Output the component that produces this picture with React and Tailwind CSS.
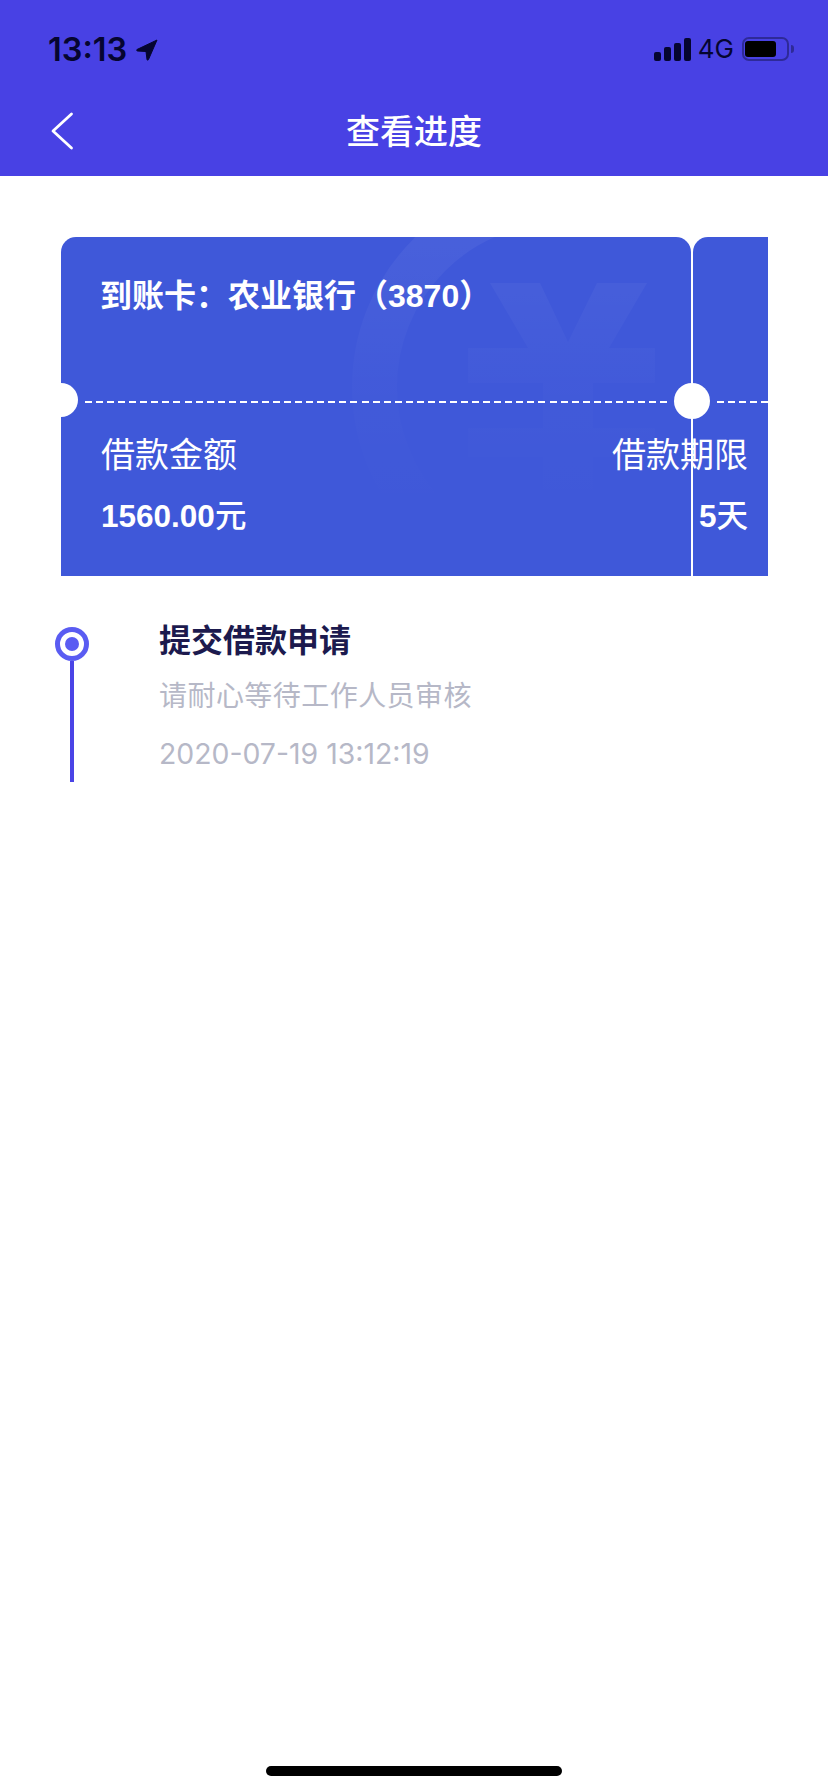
const cjk = { fontFamily: '"Liberation Sans", "Noto Sans CJK SC", sans-serif' };
const inter = { fontFamily: 'Inter, "Noto Sans CJK SC", sans-serif' };

function StatusBar() {
  return (
    <div className="flex h-[98px] items-start justify-between pl-[48px] pr-[34px] pt-[31px] text-[#050530]" style={inter}>
      <div className="mt-[1px] flex items-center gap-[9px]">
        <span className="text-[32.5px] font-semibold leading-[36px]">13:13</span>
        <svg width="22" height="22" viewBox="0 0 22 22">
          <path d="M21 1 L1 10.5 Q0 11.5 1.5 12 L10 12.5 L11 20.5 Q11.5 22 12.5 20.5 Z" fill="#050530" stroke="#050530" strokeWidth="1" strokeLinejoin="round" />
        </svg>
      </div>
      <div className="flex items-center">
        <svg width="37" height="23" viewBox="0 0 37 23" fill="#050530">
          <rect x="0" y="14" width="7" height="9" rx="2" />
          <rect x="10" y="9" width="7" height="14" rx="2" />
          <rect x="20" y="5" width="7" height="18" rx="2" />
          <rect x="30" y="0" width="7" height="23" rx="2" />
        </svg>
        <span className="ml-[7px] text-[26px] font-normal leading-[36px]">4G</span>
        <div className="ml-[8px] h-[24px] w-[47px] rounded-[7px] border-2 border-[#2e2a98] p-[2px] pl-[1px]">
          <div className="h-full w-[31px] rounded-[3px] bg-black" />
        </div>
        <div className="ml-[2px] h-[8px] w-[3px] rounded-r-full bg-[#2e2a98]" />
      </div>
    </div>
  );
}

function Header() {
  return (
    <div className="h-[176px] bg-[#4841e4]">
      <StatusBar />
      <div className="relative flex h-[66px] items-center justify-center pt-[2px]">
        <svg className="absolute left-[50px] top-[14px]" width="24" height="38" viewBox="0 0 24 38" fill="none">
          <path d="M21.5 2 L3 19 L21.5 36" stroke="#ffffff" strokeWidth="2.8" strokeLinecap="round" strokeLinejoin="round" />
        </svg>
        <span className="text-[34px] font-medium leading-[46px] text-white" style={cjk}>查看进度</span>
      </div>
    </div>
  );
}

function Ticket() {
  return (
    <div className="relative ml-[61px] mt-[61px] flex h-[339px] w-[707px] gap-[2px] overflow-hidden" style={cjk}>
      <div className="relative h-full w-[630px] shrink-0 overflow-hidden rounded-t-[15px] bg-[#3f58d9]">
        {/* faint yen coin watermark */}
        <svg className="absolute left-[280px] top-0" width="350" height="339" viewBox="0 0 350 339" fill="none">
          <defs>
            <linearGradient id="wm" gradientUnits="userSpaceOnUse" x1="0" y1="0" x2="0" y2="280">
              <stop offset="0" stopColor="#ffffff" stopOpacity="0.05" />
              <stop offset="0.5" stopColor="#ffffff" stopOpacity="0.015" />
              <stop offset="1" stopColor="#ffffff" stopOpacity="0" />
            </linearGradient>
          </defs>
          <path d="M220 -36.5 A186.5 186.5 0 0 0 220 336.5" stroke="url(#wm)" strokeWidth="45" />
          <path
            d="M149 46 L199 46 L227 105 L256 46 L306 46 L268 111 L314 111 L314 146 L252 146 L252 191 L314 191 L314 220 L252 220 L252 253 L202 253 L202 220 L127 220 L127 191 L202 191 L202 146 L127 146 L127 111 L187 111 Z"
            fill="url(#wm)"
          />
        </svg>
        <div className="relative flex h-full flex-col pl-[39px]">
          <p className="mt-[39px] text-[32px] font-semibold leading-[40px] text-white">
            到账卡：农业银行（<span className="font-bold">3870</span>）
          </p>
        </div>
      </div>
      <div className="h-full flex-1 rounded-tl-[15px] bg-[#3f58d9]" />

      {/* dashed tear line, notches and the labels sit over both cards */}
      <div className="absolute left-[24px] top-[164px] h-[2px] w-[582px] bg-[repeating-linear-gradient(90deg,#ffffff_0_7px,transparent_7px_11.06px)]" />
      <div className="absolute left-[656px] top-[164px] h-[2px] w-[51px] bg-[repeating-linear-gradient(90deg,#ffffff_0_7px,transparent_7px_11.06px)]" />
      <div className="absolute left-[-17px] top-[146px] h-[34px] w-[34px] rounded-full bg-white" />
      <div className="absolute left-[613px] top-[146px] h-[36px] w-[36px] rounded-full bg-white" />

      <div className="absolute left-[40px] right-[20px] top-[196px] flex justify-between text-white">
        <div>
          <p className="text-[34px] leading-[44px]">借款金额</p>
          <p className="mt-[17px] text-[31.5px] font-bold leading-[44px]">1560.00<span className="font-medium">元</span></p>
        </div>
        <div className="text-right">
          <p className="text-[34px] leading-[44px]">借款期限</p>
          <p className="mt-[17px] text-[31.5px] font-bold leading-[44px]">5<span className="font-medium">天</span></p>
        </div>
      </div>
    </div>
  );
}

function Timeline() {
  return (
    <div className="ml-[55px] mt-[51px] flex">
      <div className="flex w-[34px] flex-col items-center">
        <div className="flex h-[34px] w-[34px] shrink-0 items-center justify-center rounded-full border-[5px] border-[#5a5cf2] bg-white">
          <div className="h-[14px] w-[14px] rounded-full bg-[#5a5cf2]" />
        </div>
        <div className="h-[121px] w-[4px] bg-[#4a44e6]" />
      </div>
      <div className="-mt-[6px] ml-[70px]">
        <p className="text-[32px] font-bold leading-[40px] text-[#1c1a4e]" style={cjk}>提交借款申请</p>
        <p className="mt-[16px] text-[28px] leading-[40px] tracking-[0.45px] text-[#b6b8c7]" style={cjk}>请耐心等待工作人员审核</p>
        <p className="mt-[17px] text-[28.4px] leading-[40px] text-[#b6b8c7]" style={inter}>2020-07-19 13:12:19</p>
      </div>
    </div>
  );
}

export default function App() {
  return (
    <div className="relative flex h-[1792px] w-[828px] flex-col bg-white">
      <Header />
      <Ticket />
      <Timeline />
      <div className="mt-auto mb-[16px] h-[10px] w-[296px] self-center rounded-full bg-black" />
    </div>
  );
}
